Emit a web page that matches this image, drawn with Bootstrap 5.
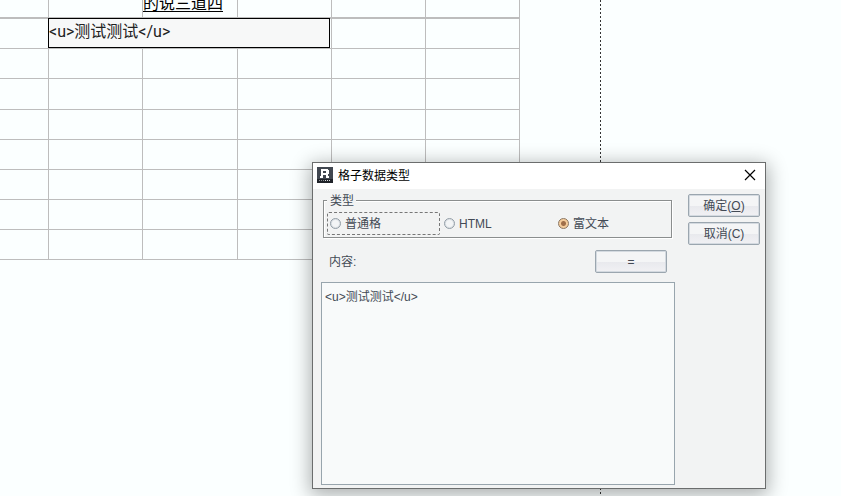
<!DOCTYPE html>
<html lang="zh-CN">
<head>
<meta charset="utf-8">
<meta name="viewport" content="width=device-width, initial-scale=1">
<title>格子数据类型</title>
<link href="https://cdn.jsdelivr.net/npm/bootstrap@5.3.0/dist/css/bootstrap.min.css" rel="stylesheet">
<style>
  body { background: #fbffff; font-family: "Liberation Sans", "Noto Sans CJK SC", sans-serif; font-size: 12px; line-height: 16px; color: #434a55; }
  .page-area { width: 601px; background: repeating-linear-gradient(to bottom, #333 0 2px, transparent 2px 4px) right top / 1px 100% no-repeat; }
  /* the sheet is scrolled a little, so its first row is cut by the window */
  .sheet { table-layout: fixed; width: 520px; border-collapse: separate; border-spacing: 0; margin-top: -11px; color: #000; font-size: 16px; line-height: 20px; }
  .sheet td { height: 30px; padding: 0; border: solid #bdbdbd; border-width: 0 1px 1px 0; white-space: nowrap; vertical-align: top; }
  .sheet tr:first-child td { border-bottom-width: 2px; vertical-align: bottom; line-height: 26px; }
  .sheet .tall td { height: 31px; }
  .sheet .c-first { width: 49px; }
  .sheet .c-std { width: 94px; }
  .sheet .c-wide { width: 95px; }
  .rich { text-decoration: underline; text-underline-offset: 2px; }
  .cell-editor { inset: -1px 1px 0 -1px; width: 282px; height: 30px; padding: 0 0 6px; border: 1px solid #000; border-radius: 0; background: #f7f8f8; color: #222; font-family: Roboto, "Noto Sans CJK SC", sans-serif; font-size: 16px; outline: 0; }
  .dlg { left: 312px; top: 162px; width: 454px; background: #f2f3f3; border: 1px solid #6b6d6d; box-shadow: 0 4px 18px 2px rgba(0,0,0,.32); }
  .dlg-title { height: 26px; gap: 5px; background: #fff; color: #000; padding: 0 8px 0 4px; }
  .dlg-title svg { margin-top: -2px; }
  .dlg-body { padding: 2px 5px 3px 8px; gap: 13px; }
  .dlg-actions { gap: 5px; padding-top: 3px; }
  .group { margin: 0 3px 0 2px; height: 47px; padding: 0 0 0 3px; border: 1px solid #8b8e8e; box-shadow: 1px 1px #fff, inset 1px 1px #fff; }
  .group legend { width: max-content; margin: 0; padding: 2px 2px 0 3px; background: #f2f3f3; font-size: 12px; line-height: 16px; float: none; }
  .choices { display: grid; grid-template-columns: 113px 113px 1fr; column-gap: 1px; margin-top: 3px; }
  .choice { height: 23px; gap: 4px; padding-left: 2px; border: 1px solid transparent; }
  .choice.focused { border: 1px dashed #777; border-radius: 2px; }
  .choice input { appearance: none; width: 11px; height: 11px; margin: 0; border: 1px solid #929da6; border-radius: 50%; background: #f3f5f6; box-shadow: inset 0 0 0 1px #dce1e5; }
  .choice input:checked { border-color: #8b7560; background: radial-gradient(circle, #a06f4a 0 2px, #f4cc9c 3px); box-shadow: none; }
  .content-row { padding: 12px 8px 9px 8px; }
  .push { width: 72px; height: 23px; padding: 0; border: 1px solid #9ba6af; border-radius: 2px; background: linear-gradient(#f4f5f6 0 50%, #e8e9ed 51%, #f1f1f4); box-shadow: inset 0 0 0 1px #d4dae0; color: #434a55; font-size: 12px; line-height: 20px; }
  .push:hover { border-color: #7c8894; }
  .source { height: 203px; padding: 6px 3px; border: 1px solid #98a5ad; border-radius: 0; background: #f8fafa; color: #434a55; font-size: 12px; line-height: 16px; resize: none; outline: 0; }
</style>
<script src="https://cdn.jsdelivr.net/npm/bootstrap@5.3.0/dist/js/bootstrap.bundle.min.js"></script>
</head>
<body class="vh-100 overflow-hidden position-relative">
<main class="page-area h-100 overflow-hidden">
  <table class="sheet">
    <colgroup><col class="c-first"><col class="c-std"><col class="c-wide"><col class="c-std"><col class="c-std"><col class="c-std"></colgroup>
    <tbody>
      <tr><td></td><td></td><td><span class="rich">的说三道四</span></td><td></td><td></td><td></td></tr>
      <tr><td></td><td colspan="3" class="position-relative"><input class="cell-editor position-absolute" type="text" aria-label="单元格" value="&lt;u&gt;测试测试&lt;/u&gt;"></td><td></td><td></td></tr>
      <tr><td></td><td></td><td></td><td></td><td></td><td></td></tr>
      <tr class="tall"><td></td><td></td><td></td><td></td><td></td><td></td></tr>
      <tr><td></td><td></td><td></td><td></td><td></td><td></td></tr>
      <tr><td></td><td></td><td></td><td></td><td></td><td></td></tr>
      <tr><td></td><td></td><td></td><td></td><td></td><td></td></tr>
      <tr><td></td><td></td><td></td><td></td><td></td><td></td></tr>
      <tr><td></td><td></td><td></td><td></td><td></td><td></td></tr>
    </tbody>
  </table>
</main>

<section class="dlg position-absolute" role="dialog" aria-labelledby="dlgTitle">
  <header class="dlg-title d-flex align-items-center">
    <svg width="16" height="16" viewBox="0 0 16 16" shape-rendering="crispEdges" aria-hidden="true">
      <path fill="#414750" d="M0 0h16v12H0z"/><path fill="#202329" d="M0 12h16v4H0z"/>
      <path fill="#fff" fill-rule="evenodd" d="M4 2h7v1h1v4h-1v2h1v2H9V8H6v3H3V9h1zM6 4v2h3V4z"/>
      <path fill="#8d9195" d="M2 13h1v1H2zM4 13h1v1H4zM6 13h1v1H6z"/><path fill="#dcdedf" d="M8 13h1v1H8zM10 13h1v1h-1zM12 13h1v1h-1z"/>
    </svg>
    <span id="dlgTitle">格子数据类型</span>
    <button type="button" class="btn p-0 border-0 ms-auto d-flex" aria-label="关闭">
      <svg width="14" height="14" viewBox="0 0 14 14" aria-hidden="true"><path d="M2 2l10 10M12 2L2 12" stroke="#000" stroke-width="1.2"/></svg>
    </button>
  </header>
  <form class="dlg-body d-flex align-items-start">
    <div class="flex-grow-1">
      <fieldset class="group">
        <legend>类型</legend>
        <div class="choices">
          <label class="choice focused d-flex align-items-center"><input type="radio" name="kind">普通格</label>
          <label class="choice d-flex align-items-center"><input type="radio" name="kind">HTML</label>
          <label class="choice d-flex align-items-center"><input type="radio" name="kind" checked>富文本</label>
        </div>
      </fieldset>
      <div class="content-row d-flex align-items-center justify-content-between">
        <label for="source">内容:</label>
        <button type="button" class="btn push">=</button>
      </div>
      <textarea id="source" class="source d-block w-100">&lt;u&gt;测试测试&lt;/u&gt;</textarea>
    </div>
    <div class="dlg-actions d-flex flex-column">
      <button type="button" class="btn push">确定(<u>O</u>)</button>
      <button type="button" class="btn push">取消(C)</button>
    </div>
  </form>
</section>
</body>
</html>
